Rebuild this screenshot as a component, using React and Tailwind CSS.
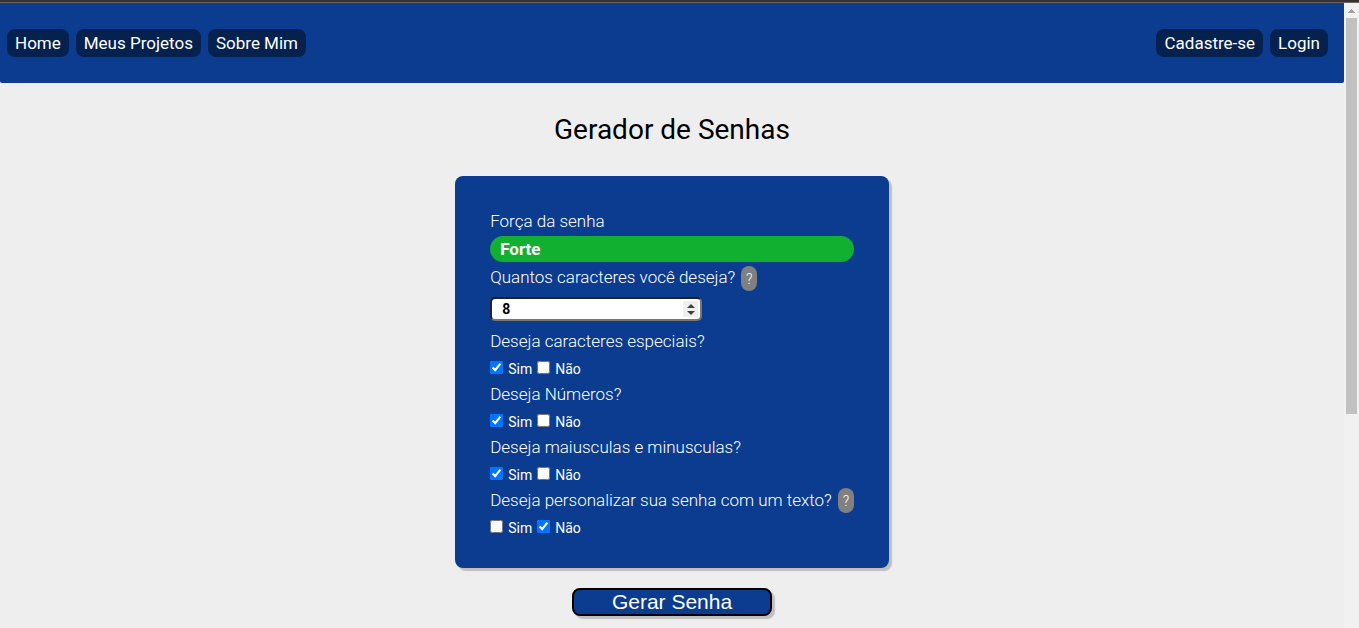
import { useState } from "react";

const leftLinks = ["Home", "Meus Projetos", "Sobre Mim"];
const rightLinks = ["Cadastre-se", "Login"];

const questions = [
  { id: "especiais", text: "Deseja caracteres especiais?", initial: true },
  { id: "numeros", text: "Deseja Números?", initial: true },
  { id: "caixa", text: "Deseja maiusculas e minusculas?", initial: true },
  { id: "texto", text: "Deseja personalizar sua senha com um texto?", initial: false, help: true },
];

function NavLink({ children }) {
  return (
    <a href="#" className="rounded-lg bg-[#052150] px-2 py-0.5 text-[17px] leading-6 text-white">
      {children}
    </a>
  );
}

function Help() {
  return (
    <button
      type="button"
      aria-label="Ajuda"
      className="flex h-[25px] w-4 items-center justify-center rounded-full bg-[#808080] text-sm font-light text-white"
    >
      ?
    </button>
  );
}

function Option({ id, label, checked, onChange }) {
  return (
    <div className="flex items-start gap-[5px]">
      <input id={id} type="checkbox" checked={checked} onChange={onChange} className="mt-0.5 size-[13px]" />
      <label htmlFor={id} className="text-sm leading-5">{label}</label>
    </div>
  );
}

function Question({ id, text, initial, help }) {
  const [yes, setYes] = useState(initial);
  return (
    <fieldset>
      <div className="flex h-6 items-start gap-[6px]">
        <span className="text-[17px] leading-6 font-light">{text}</span>
        {help && <Help />}
      </div>
      <div className="mt-[6px] flex gap-[5px]">
        <Option id={id + "-sim"} label="Sim" checked={yes} onChange={() => setYes(true)} />
        <Option id={id + "-nao"} label="Não" checked={!yes} onChange={() => setYes(false)} />
      </div>
    </fieldset>
  );
}

function ScrollTrack() {
  return (
    <div aria-hidden="true" className="flex w-[15px] shrink-0 flex-col items-center bg-[#f1f1f1]">
      <div className="flex h-[15px] items-center">
        <svg width="7" height="4" viewBox="0 0 7 4" shapeRendering="crispEdges" fill="#a3a3a3">
          <path d="M3 0h1v1h1v1h1v1h1v1H0V3h1V2h1V1h1z" />
        </svg>
      </div>
      <div className="h-[396px] w-[11px] bg-[#c1c1c1]" />
    </div>
  );
}

export default function App() {
  const [length, setLength] = useState("8");
  const step = (n) => setLength((v) => String(Math.max(0, Number(v) + n)));
  return (
    <div className="flex h-screen flex-col overflow-hidden bg-[#eeeeee] font-['Roboto',sans-serif] text-black">
      <div className="h-[3px] shrink-0 border-b border-[#6b6562] bg-[#353332]" />
      <div className="flex min-h-0 flex-1">
        <div className="min-w-0 flex-1">
          <header className="flex h-20 items-center justify-between rounded-b-[2px] bg-[#0c3c8f] pr-4 pl-[7px]">
            <nav className="flex gap-[7px]">
              {leftLinks.map((t) => <NavLink key={t}>{t}</NavLink>)}
            </nav>
            <nav className="flex gap-[7px]">
              {rightLinks.map((t) => <NavLink key={t}>{t}</NavLink>)}
            </nav>
          </header>
          <main className="flex flex-col items-center">
            <h1 className="mt-[31px] text-[28px] leading-8">Gerador de Senhas</h1>
            <form className="mt-[30px] flex flex-col items-center gap-5" onSubmit={(e) => e.preventDefault()}>
              <div className="rounded-lg bg-[#0c3c8f] px-[35px] pt-[33px] pb-[30px] text-white shadow-[3px_3px_1px_#c0bebe]">
                <p className="text-[17px] leading-6 font-light">Força da senha</p>
                <p className="mt-[3px] h-[26px] rounded-full bg-[#12b031] px-[10px] text-[17px] leading-[26px] font-bold">Forte</p>
                <div className="mt-1 flex items-start gap-[6px]">
                  <label htmlFor="tamanho" className="text-[17px] leading-[22px] font-light">Quantos caracteres você deseja?</label>
                  <Help />
                </div>
                <div className="relative mt-[6px] w-[212px]">
                  <input
                    id="tamanho"
                    type="number"
                    value={length}
                    onChange={(e) => setLength(e.target.value)}
                    className="block h-6 w-full appearance-none rounded-[5px] border-2 border-t-[#222222] border-r-[#767676] border-b-[#767676] border-l-[#222222] bg-white pr-5 pl-[10px] text-sm leading-5 font-bold text-black outline-none [&::-webkit-inner-spin-button]:appearance-none"
                  />
                  <div className="absolute inset-y-1 right-1 flex w-[15px] flex-col bg-[#efefef]">
                    <button type="button" aria-label="Aumentar" onClick={() => step(1)} className="flex flex-1 items-end justify-center pb-px">
                      <svg width="8" height="4" viewBox="0 0 8 4" fill="#404040"><path d="M4 0L8 4H0z" /></svg>
                    </button>
                    <button type="button" aria-label="Diminuir" onClick={() => step(-1)} className="flex flex-1 items-start justify-center pt-0.5">
                      <svg width="8" height="4" viewBox="0 0 8 4" fill="#404040"><path d="M0 0H8L4 4z" /></svg>
                    </button>
                  </div>
                </div>
                <div className="mt-2 flex flex-col gap-[3px]">
                  {questions.map((q) => <Question key={q.id} {...q} />)}
                </div>
              </div>
              <button
                type="submit"
                className="h-7 w-[200px] rounded-lg border-2 border-black bg-[#0c3c8f] font-['Liberation_Sans',sans-serif] text-[21px] leading-6 text-white shadow-[3px_3px_1px_#c0bebe]"
              >
                Gerar Senha
              </button>
            </form>
          </main>
        </div>
        <ScrollTrack />
      </div>
    </div>
  );
}
